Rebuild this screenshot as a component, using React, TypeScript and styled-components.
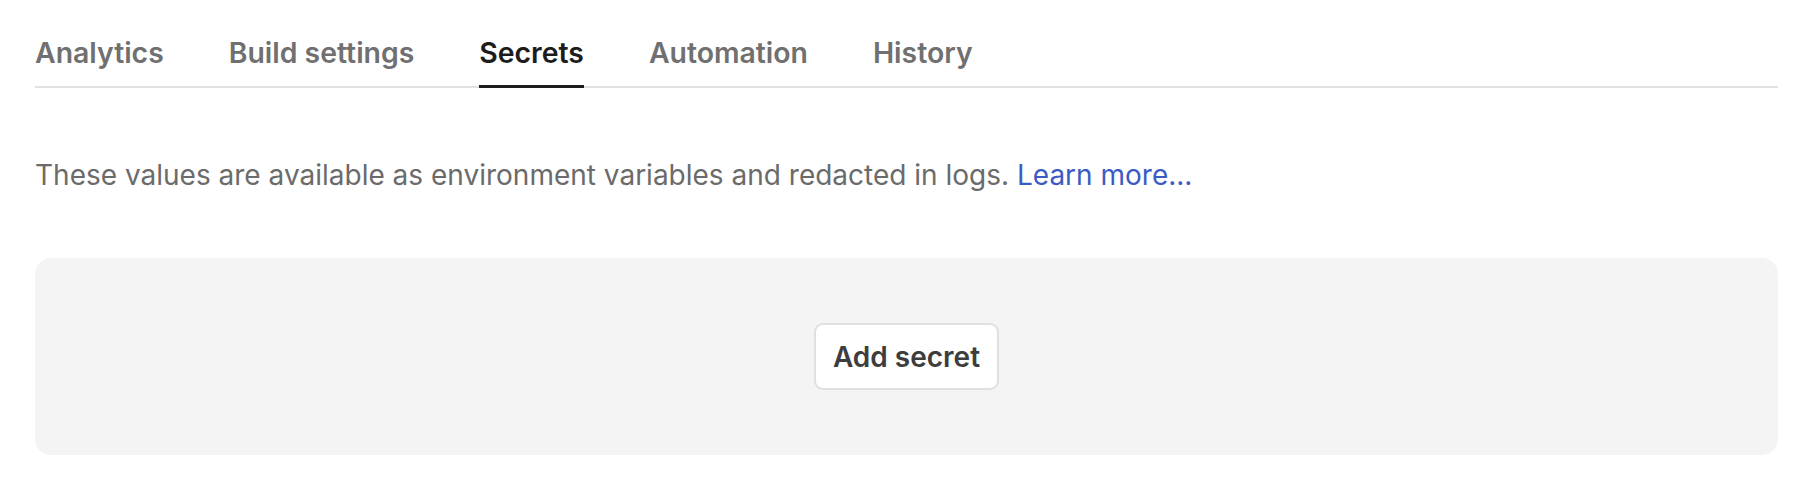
import styled, { createGlobalStyle } from "styled-components"
import { FC } from 'react';


const GlobalStyle = createGlobalStyle`
    body {
        margin: 0;
        background: #ffffff;
        font-family: "Inter", "Noto Sans", sans-serif;
    }
`

const Page = styled.div`
    padding: 36px 32px 40px 35px;
`

const TabBar = styled.div`
    display: flex;
    gap: 65px;
    border-bottom: 2px solid #e2e2e2;
`

const Tab = styled.div<{ $active?: boolean }>`
    position: relative;
    font-size: 28.4px;
    line-height: 34px;
    font-weight: 600;
    padding-bottom: 16px;
    color: ${p => (p.$active ? "#1c1c1c" : "#707070")};
    cursor: pointer;

    &::after {
        content: "";
        display: ${p => (p.$active ? "block" : "none")};
        position: absolute;
        left: 0;
        right: 0;
        bottom: -2px;
        height: 3px;
        background: #1c1c1c;
    }
`

const Description = styled.p`
    margin: 70px 0 0;
    font-size: 28px;
    line-height: 34px;
    color: #6b6b6b;

    a {
        color: #3b5bc4;
        text-decoration: none;
    }
`

const EmptyPanel = styled.div`
    margin-top: 66px;
    height: 197px;
    background: #f4f4f4;
    border-radius: 16px;
    display: flex;
    align-items: center;
    justify-content: center;
`

const AddButton = styled.button`
    height: 67px;
    padding: 0 17px;
    background: #ffffff;
    border: 2px solid #e0e0e0;
    border-radius: 9px;
    font-family: "Inter", "Noto Sans", sans-serif;
    font-size: 28px;
    font-weight: 600;
    color: #3d3d3d;
    cursor: pointer;
`

const tabs = ["Analytics", "Build settings", "Secrets", "Automation", "History"]

const App: FC = () => {
    return (
        <>
            <GlobalStyle />
            <Page>
                <TabBar>
                    {tabs.map(t => (
                        <Tab key={t} $active={t === "Secrets"}>{t}</Tab>
                    ))}
                </TabBar>

                <Description>
                    These values are available as environment variables and redacted in logs.{" "}
                    <a href="#">Learn more...</a>
                </Description>

                <EmptyPanel>
                    <AddButton>Add secret</AddButton>
                </EmptyPanel>
            </Page>
        </>
    )
}

export default App
